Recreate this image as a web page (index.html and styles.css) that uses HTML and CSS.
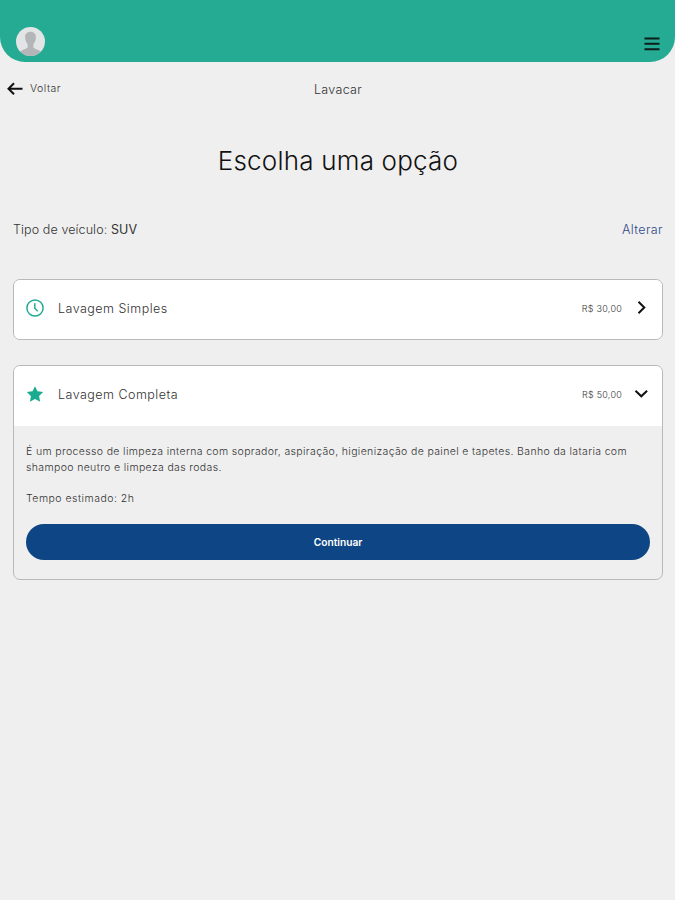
FILE: index.html
```
<!DOCTYPE html>
<html lang="pt-BR">
<head>
  <meta charset="UTF-8" />
  <meta name="viewport" content="width=device-width, initial-scale=1.0"/>
  <title>Lavacar</title>
  <link rel="stylesheet" href="styles.css">
</head>
<body>

  <header>
    <svg class="avatar" viewBox="0 0 28 28">
      <defs>
        <clipPath id="avatarClip"><circle cx="14" cy="14" r="14"/></clipPath>
      </defs>
      <g clip-path="url(#avatarClip)">
        <rect width="28" height="28" fill="#e2e4e5"/>
        <path d="M14 4.500c-3.600 0-5.400 2.400-5.200 5.700.1 2.600 1 4.900 2.400 6.300v3.500c-1.300 1.300-5.200 1.600-7.700 4.400V28h21v-3.600c-2.500-2.800-6.400-3.100-7.700-4.400v-3.500c1.400-1.400 2.300-3.700 2.400-6.300.2-3.300-1.600-5.700-5.200-5.700z" fill="#b3b5b6"/>
      </g>
    </svg>
    <svg class="menu-icon" viewBox="0 0 16 14">
      <path d="M.5 1.500h15M.5 6.800h15M.5 12.200h15"/>
    </svg>
  </header>

  <nav>
    <a href="#" class="back">
      <svg viewBox="0 0 16 14">
        <path d="M7 1.200L1.500 6.700 7 12.200M2 6.700h13.500"/>
      </svg>
      <span>Voltar</span>
    </a>
    <span class="page-name">Lavacar</span>
  </nav>

  <main>
    <h1>Escolha uma opção</h1>

    <div class="vehicle">
      <span class="vehicle-type">Tipo de veículo: <b>SUV</b></span>
      <a href="#" class="change">Alterar</a>
    </div>

    <!-- Lavagem Simples -->
    <div class="option">
      <div class="option-head">
        <svg class="option-icon clock" viewBox="0 0 18 18">
          <circle cx="9" cy="9" r="8.100"/>
          <path d="M8.800 4.200v5l3 3"/>
        </svg>
        <span class="option-name">Lavagem Simples</span>
        <span class="price">R$ 30,00</span>
        <svg class="chevron" viewBox="0 0 14 14">
          <path d="M4.500.7l5.800 5.800-5.800 5.800"/>
        </svg>
      </div>
    </div>

    <!-- Lavagem Completa -->
    <div class="option">
      <div class="option-head">
        <svg class="option-icon star" viewBox="0 0 18 18">
          <path d="M9 1.200l2.500 5.100 5.700.7-4.100 4 1 5.700L9 14l-5.100 2.700 1-5.700L.8 7l5.700-.7z"/>
        </svg>
        <span class="option-name">Lavagem Completa</span>
        <span class="price">R$ 50,00</span>
        <svg class="chevron" viewBox="0 0 14 14">
          <path d="M1.500 3.700l5.800 5.600 5.800-5.600"/>
        </svg>
      </div>
      <div class="option-body">
        <p class="description">É um processo de limpeza interna com soprador, aspiração, higienização de painel e tapetes. Banho da lataria com<br>shampoo neutro e limpeza das rodas.</p>
        <p class="time">Tempo estimado: 2h</p>
        <button class="continue-btn">Continuar</button>
      </div>
    </div>
  </main>

</body>
</html>
```
FILE: styles.css
```
* {
  box-sizing: border-box;
}

body {
  font-family: Inter, "Open Sans", sans-serif;
  font-weight: 300;
  margin: 0;
  color: #333;
  background-color: #efefef;
}

a {
  color: inherit;
  text-decoration: none;
}

svg {
  display: block;
  flex: none;
}

header {
  display: flex;
  justify-content: space-between;
  align-items: flex-end;
  height: 62px;
  padding: 0 15px 6px 16px;
  background-color: #25ab93;
  border-radius: 0 0 25px 25px;
}

.avatar {
  width: 29px;
  height: 29px;
}

.menu-icon {
  width: 16px;
  height: 14px;
  margin-bottom: 5px;
  fill: none;
  stroke: #0b1d1a;
  stroke-width: 2;
}

nav {
  display: grid;
  grid-template-columns: 1fr auto 1fr;
  align-items: center;
  height: 53px;
  padding: 0 7px;
}

.back {
  display: flex;
  align-items: center;
  gap: 7px;
  font-size: 10.5px;
  letter-spacing: 0.5px;
}

.back svg {
  width: 16px;
  height: 14px;
  fill: none;
  stroke: #111;
  stroke-width: 2;
}

.page-name {
  font-size: 12.5px;
  letter-spacing: 0.3px;
  padding: 2px 0 0 1px;
}

main {
  padding: 0 12px 0 13px;
}

h1 {
  margin: 29px 0 0;
  font-size: 26px;
  line-height: 34px;
  font-weight: 300;
  letter-spacing: 0.2px;
  text-align: center;
  color: #111;
}

.vehicle {
  display: flex;
  justify-content: space-between;
  align-items: center;
  height: 20px;
  margin: 41px 0 40px;
  font-size: 12.5px;
  letter-spacing: 0.1px;
}

.vehicle b {
  font-weight: 400;
}

.change {
  color: #2f4a86;
  letter-spacing: 0.4px;
}

.option {
  margin-bottom: 25px;
  border: 1px solid #b9b9b9;
  border-radius: 7px;
  overflow: hidden;
}

.option-head {
  display: flex;
  align-items: center;
  height: 59px;
  padding: 0 14px 3px 12px;
  background-color: #fff;
}

/* the open option has a slightly taller head */
.option-head:not(:last-child) {
  height: 60px;
  padding-bottom: 4px;
}

.option-icon {
  width: 18px;
  height: 18px;
}

.clock {
  fill: none;
  stroke: #25ab93;
  stroke-width: 1.5;
}

.star {
  fill: #1bab8f;
}

.option-name {
  flex: 1;
  margin-left: 14px;
  font-size: 12.5px;
  letter-spacing: 0.48px;
}

.price {
  margin-right: 12px;
  font-size: 9px;
  letter-spacing: 0.25px;
}

.chevron {
  width: 14px;
  height: 14px;
  fill: none;
  stroke: #111;
  stroke-width: 2;
}

.option-body {
  padding: 18px 12px 19px;
  font-size: 10.5px;
  line-height: 16px;
}

.description {
  margin: 0 0 15px;
  letter-spacing: 0.36px;
  white-space: nowrap;
}

.time {
  margin: 0 0 17px;
  letter-spacing: 0.48px;
}

.continue-btn {
  display: block;
  width: 100%;
  height: 36px;
  border: none;
  border-radius: 18px;
  background-color: #0e4584;
  color: #fff;
  font-family: inherit;
  font-size: 10.2px;
  font-weight: 600;
  cursor: pointer;
}
```
